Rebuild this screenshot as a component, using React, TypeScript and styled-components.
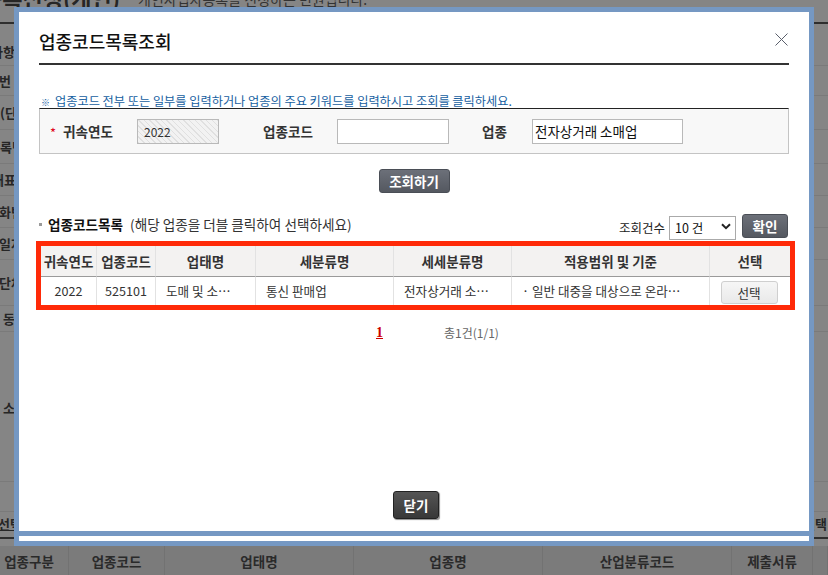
import React from 'react';
import styled, { createGlobalStyle } from 'styled-components';

const GlobalStyle = createGlobalStyle`
  html, body {
    margin: 0;
    padding: 0;
  }
  body {
    width: 828px;
    height: 575px;
    overflow: hidden;
    font-family: "Noto Sans CJK KR", "Noto Sans", sans-serif;
  }
  * {
    box-sizing: border-box;
  }
`;

// Background page (dimmed under the modal)
const Page = styled.div`
  position: relative;
  width: 828px;
  height: 575px;
  overflow: hidden;
  background: #858585;
  color: #262626;
  display: flex;
  flex-direction: column;
`;

const PageHead = styled.div`
  height: 24px;
  flex: none;
  display: flex;
  align-items: flex-end;
  overflow: hidden;
  border-bottom: 2px solid #2e2e2e;
`;

const PageTitle = styled.span`
  font-size: 22px;
  line-height: 22px;
  font-weight: 700;
  margin: 0 0 14px -18px;
  white-space: nowrap;
`;

const PageSub = styled.span`
  font-size: 14px;
  line-height: 14px;
  margin: 0 0 16px 18px;
  color: #333;
  white-space: nowrap;
`;

const BgRow = styled.div<{ $h: number; $line?: boolean }>`
  height: ${p => p.$h}px;
  flex: none;
  display: flex;
  align-items: center;
  justify-content: space-between;
  border-bottom: ${p => (p.$line ? '1px solid #7a7a7a' : '1px solid transparent')};
  font-size: 13px;
  line-height: 16px;
  font-weight: 700;
  white-space: nowrap;
  overflow: hidden;
`;

const BgLabel = styled.span<{ $indent: number; $link?: boolean }>`
  margin-left: ${p => p.$indent}px;
  text-decoration: ${p => (p.$link ? 'underline' : 'none')};
`;

const BgRight = styled.span`
  width: 25px;
`;

const BgFooter = styled.div`
  flex: none;
  border-top: 2px solid #2e2e2e;
  padding-top: 7px;
`;

const BgHeadRow = styled.div`
  height: 29px;
  display: grid;
  grid-template-columns: 69px 96px 189px 189px 189px 81px 1fr;
  background: #7b7b7b;
`;

const BgHeadCell = styled.div<{ $pr?: number }>`
  display: flex;
  align-items: center;
  justify-content: center;
  padding-right: ${p => p.$pr || 0}px;
  border-right: 1px solid #727272;
  font-size: 13.5px;
  font-weight: 700;
  color: #2a2a2a;
  white-space: nowrap;
`;

// Modal
const Modal = styled.div`
  position: absolute;
  left: 14px;
  top: 7px;
  width: 800px;
  height: 539px;
  padding: 5px;
  background: #7598c3;
  z-index: 2;
  display: flex;
  flex-direction: column;
`;

const ModalBody = styled.div`
  height: 519px;
  background: #fff;
  padding: 0 20px 12px;
  display: flex;
  flex-direction: column;
`;

const ModalStrip = styled.div`
  height: 5px;
  margin-top: 5px;
  background: #fff;
`;

const ModalHeader = styled.div`
  height: 53px;
  padding-top: 19px;
  border-bottom: 2px solid #333;
  display: flex;
  justify-content: space-between;
  align-items: flex-start;
`;

const ModalTitle = styled.h2`
  margin: 0;
  font-size: 18px;
  line-height: 20px;
  font-weight: 500;
  color: #111;
`;

const CloseButton = styled.button`
  margin-top: 2px;
  margin-right: 1px;
  width: 13px;
  height: 13px;
  padding: 0;
  border: 0;
  background: transparent;
  display: flex;
`;

const Notice = styled.p`
  margin: 29px 0 0;
  height: 14px;
  font-size: 12.2px;
  line-height: 14px;
  color: #155e9f;
  white-space: nowrap;
`;

const NoticeMark = styled.span`
  font-size: 9px;
  margin: 0 5px 0 2px;
`;

const SearchBox = styled.div`
  height: 46px;
  display: flex;
  align-items: center;
  padding-left: 10px;
  background: #f8f8f8;
  border: 1px solid #c4c4c4;
  border-top-color: #222;
`;

const Required = styled.span`
  width: 13px;
  font-size: 13px;
  line-height: 13px;
  color: #e0001b;
  padding-top: 3px;
`;

const FieldLabel = styled.label<{ $w: number }>`
  width: ${p => p.$w}px;
  font-size: 13.6px;
  line-height: 16px;
  font-weight: 700;
  color: #333;
`;

const TextInput = styled.input<{ $w: number; $gap?: number }>`
  width: ${p => p.$w}px;
  height: 25px;
  margin: 0 ${p => p.$gap || 0}px 0 0;
  padding: 0 6px;
  border: 1px solid #b9b9b9;
  background: #fff;
  font-family: inherit;
  font-size: 13.5px;
  color: #111;
  outline: none;
`;

const ReadOnlyInput = styled(TextInput)`
  font-size: 12px;
  color: #333;
  background: repeating-linear-gradient(45deg, #e0e0e0 0 1px, #f2f2f2 1px 4px);
`;

const DarkButton = styled.button<{ $w: number; $h: number }>`
  width: ${p => p.$w}px;
  height: ${p => p.$h}px;
  padding: 0;
  border: 1px solid #4a4e56;
  border-radius: 3px;
  background: linear-gradient(#6c7079, #545860);
  color: #fff;
  font-family: inherit;
  font-size: 13.5px;
  font-weight: 700;
  line-height: 16px;
`;

const SearchAction = styled.div`
  margin-top: 15px;
  display: flex;
  justify-content: center;
`;

const ListBar = styled.div`
  margin-top: 21px;
  height: 24px;
  display: flex;
  align-items: center;
`;

const ListTitle = styled.div`
  display: flex;
  align-items: center;
  margin-bottom: 4px;
  font-size: 13.6px;
  line-height: 16px;
  color: #333;
  white-space: nowrap;
`;

const Bullet = styled.i`
  width: 3px;
  height: 3px;
  background: #9a9a9a;
  margin-right: 6px;
`;

const ListName = styled.strong`
  color: #111;
  margin-right: 7px;
`;

const ListTools = styled.div`
  margin-left: auto;
  margin-right: 1px;
  display: flex;
  align-items: center;
`;

const ToolLabel = styled.span`
  font-size: 12.5px;
  line-height: 16px;
  color: #222;
  margin-right: 4px;
  padding-top: 3px;
`;

const SelectWrap = styled.div`
  position: relative;
  width: 67px;
  height: 24px;
  margin-right: 6px;
`;

const CountSelect = styled.select`
  appearance: none;
  width: 100%;
  height: 100%;
  padding: 0 0 0 5px;
  border: 1px solid #aaa;
  background: #fff;
  font-family: inherit;
  font-size: 12.5px;
  color: #111;
  outline: none;
`;

const Chevron = styled.svg`
  position: absolute;
  right: 5px;
  top: 9px;
  pointer-events: none;
`;

const Highlight = styled.div`
  margin: 3px 0 0 -3px;
  width: 759px;
  border: 5px solid #ff2a08;
`;

const Table = styled.table`
  width: 749px;
  table-layout: fixed;
  border-collapse: separate;
  border-spacing: 0;
`;

const Th = styled.th`
  height: 31px;
  padding: 0;
  background: #f3f2f1;
  border-bottom: 1px solid #9a9a9a;
  border-right: 1px solid #e2e2e2;
  font-size: 13.5px;
  line-height: 16px;
  font-weight: 700;
  color: #333;
  white-space: nowrap;
  &:last-child {
    border-right: 0;
  }
`;

const Td = styled.td<{ $align?: 'left' | 'center' }>`
  height: 28px;
  padding: ${p => (p.$align === 'left' ? '0 19px 0 10px' : '0')};
  text-align: ${p => p.$align || 'center'};
  border-right: 1px solid #e2e2e2;
  font-size: 12.6px;
  line-height: 16px;
  color: #333;
  white-space: nowrap;
  overflow: hidden;
  text-overflow: ellipsis;
  &:last-child {
    border-right: 0;
  }
`;

const PickButton = styled.button`
  width: 57px;
  height: 23px;
  padding: 0;
  margin: 2px 0 0 -2px;
  border: 1px solid #cfcfcf;
  border-radius: 3px;
  background: linear-gradient(#f6f6f6, #e9e9e9);
  font-family: inherit;
  font-size: 12.6px;
  color: #333;
`;

const Paging = styled.div`
  margin-top: 15px;
  height: 16px;
  padding-left: 337px;
  display: flex;
  align-items: center;
`;

const PageNum = styled.a`
  font-family: "Liberation Serif", serif;
  font-size: 14px;
  font-weight: 700;
  line-height: 16px;
  color: #cc0000;
  text-decoration: underline;
  margin-right: 61px;
`;

const Total = styled.span`
  font-size: 12px;
  line-height: 16px;
  color: #666;
`;

const ModalFooter = styled.div`
  margin-top: auto;
  display: flex;
  justify-content: center;
  padding-left: 4px;
`;

const CloseDark = styled(DarkButton)`
  border-color: #222;
  background: linear-gradient(#555, #383838);
  box-shadow: 1px 1px 1px rgba(0, 0, 0, 0.45);
`;

const bgRows: { h: number; label?: string; indent?: number; line?: boolean; link?: boolean; right?: string }[] = [
  { h: 14 },
  { h: 28, label: '사항', indent: -9, line: true },
  { h: 30, label: '번', indent: -1, line: true },
  { h: 34, label: '(단', indent: 0, line: true },
  { h: 34, label: '록번', indent: 0, line: true },
  { h: 32, label: '대표', indent: -8, line: true },
  { h: 32, label: '화번', indent: -1, line: true },
  { h: 32, label: '일자', indent: -1, line: true },
  { h: 46, label: '단체', indent: -1, line: true },
  { h: 26, label: '동', indent: 3, line: true },
  { h: 48 },
  { h: 56, label: '소', indent: 3 },
  { h: 46, line: true },
  { h: 30, line: true },
  { h: 25, label: '선택', indent: -2, link: true, right: '선택' },
];

const columns = ['귀속연도', '업종코드', '업태명', '세분류명', '세세분류명', '적용범위 및 기준', '선택'];
const colWidths = [56, 59, 100, 138, 118, 198, 80];

const App: React.FC = () => {
  return (
    <>
      <GlobalStyle />
      <Page>
        <PageHead>
          <PageTitle>등록신청(개인)</PageTitle>
          <PageSub>개인사업자등록을 신청하는 민원입니다.</PageSub>
        </PageHead>
        {bgRows.map((r, i) => (
          <BgRow key={i} $h={r.h} $line={r.line}>
            <BgLabel $indent={r.indent || 0} $link={r.link}>{r.label}</BgLabel>
            {r.right && <BgRight>{r.right}</BgRight>}
          </BgRow>
        ))}
        <BgFooter>
          <BgHeadRow>
            <BgHeadCell $pr={10}>업종구분</BgHeadCell>
            <BgHeadCell>업종코드</BgHeadCell>
            <BgHeadCell>업태명</BgHeadCell>
            <BgHeadCell>업종명</BgHeadCell>
            <BgHeadCell>산업분류코드</BgHeadCell>
            <BgHeadCell>제출서류</BgHeadCell>
            <BgHeadCell />
          </BgHeadRow>
        </BgFooter>

        <Modal>
          <ModalBody>
            <ModalHeader>
              <ModalTitle>업종코드목록조회</ModalTitle>
              <CloseButton aria-label="닫기">
                <svg width="13" height="13" viewBox="0 0 13 13">
                  <path d="M0.5 0.5 L12.5 12.5 M12.5 0.5 L0.5 12.5" stroke="#5a5f6b" strokeWidth="1" fill="none" />
                </svg>
              </CloseButton>
            </ModalHeader>

            <Notice>
              <NoticeMark>※</NoticeMark>
              업종코드 전부 또는 일부를 입력하거나 업종의 주요 키워드를 입력하시고 조회를 클릭하세요.
            </Notice>

            <SearchBox>
              <Required>*</Required>
              <FieldLabel $w={74}>귀속연도</FieldLabel>
              <ReadOnlyInput $w={82} $gap={44} value="2022" readOnly />
              <FieldLabel $w={74}>업종코드</FieldLabel>
              <TextInput $w={112} $gap={33} defaultValue="" />
              <FieldLabel $w={50}>업종</FieldLabel>
              <TextInput $w={151} defaultValue="전자상거래 소매업" style={{ paddingLeft: 2 }} />
            </SearchBox>

            <SearchAction>
              <DarkButton $w={71} $h={24}>조회하기</DarkButton>
            </SearchAction>

            <ListBar>
              <ListTitle>
                <Bullet />
                <ListName>업종코드목록</ListName>
                (해당 업종을 더블 클릭하여 선택하세요)
              </ListTitle>
              <ListTools>
                <ToolLabel>조회건수</ToolLabel>
                <SelectWrap>
                  <CountSelect defaultValue="10">
                    <option value="10">10 건</option>
                    <option value="20">20 건</option>
                    <option value="50">50 건</option>
                  </CountSelect>
                  <Chevron width="10" height="7" viewBox="0 0 10 7">
                    <path d="M1 1.2 L5 5.2 L9 1.2" stroke="#222" strokeWidth="2" fill="none" />
                  </Chevron>
                </SelectWrap>
                <DarkButton $w={46} $h={24}>확인</DarkButton>
              </ListTools>
            </ListBar>

            <Highlight>
              <Table>
                <colgroup>
                  {colWidths.map((w, i) => (
                    <col key={i} style={{ width: w }} />
                  ))}
                </colgroup>
                <thead>
                  <tr>
                    {columns.map(c => (
                      <Th key={c}>{c}</Th>
                    ))}
                  </tr>
                </thead>
                <tbody>
                  <tr>
                    <Td>2022</Td>
                    <Td>525101</Td>
                    <Td $align="left">도매 및 소매업</Td>
                    <Td $align="left">통신 판매업</Td>
                    <Td $align="left">전자상거래 소매업</Td>
                    <Td $align="left">· 일반 대중을 대상으로 온라인 통신망을 통하여</Td>
                    <Td>
                      <PickButton>선택</PickButton>
                    </Td>
                  </tr>
                </tbody>
              </Table>
            </Highlight>

            <Paging>
              <PageNum>1</PageNum>
              <Total>총1건(1/1)</Total>
            </Paging>

            <ModalFooter>
              <CloseDark $w={46} $h={28}>닫기</CloseDark>
            </ModalFooter>
          </ModalBody>
          <ModalStrip />
        </Modal>
      </Page>
    </>
  );
};

export default App;
